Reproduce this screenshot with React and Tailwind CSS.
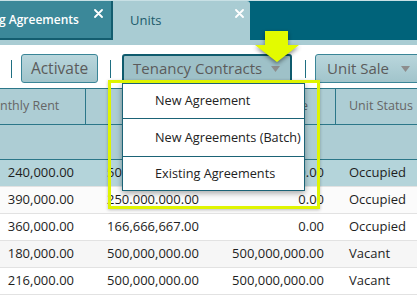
import React from "react";

const Tri = ({ className = "" }) => (
  <svg width="9" height="6" viewBox="0 0 9 6" className={className}>
    <polygon points="0,0 9,0 4.5,6" fill="#8d8d8d" />
  </svg>
);

const X = ({ className = "" }) => (
  <svg width="9" height="9" viewBox="0 0 9 9" className={className}>
    <path d="M1 1 L8 8 M8 1 L1 8" stroke="#ffffff" strokeWidth="1.8" strokeLinecap="round" />
  </svg>
);

const rows = [
  { a: "240,000.00", b: "500,000,000.00", c: "0.00", d: "Occupied", bg: "bg-[#b4d4da]" },
  { a: "390,000.00", b: "250.000.000.00", c: "0.00", d: "Occupied", bg: "bg-[#fbfbfb]" },
  { a: "360,000.00", b: "166,666,667.00", c: "0.00", d: "Occupied", bg: "bg-white" },
  { a: "180,000.00", b: "500,000,000.00", c: "500,000,000.00", d: "Vacant", bg: "bg-[#f6f6f6]" },
  { a: "216,000.00", b: "500,000,000.00", c: "500,000,000.00", d: "Vacant", bg: "bg-white" },
];

export default function App() {
  return (
    <div className="relative w-[417px] h-[297px] overflow-hidden bg-white font-['Open_Sans',sans-serif]">
      {/* tab bar */}
      <div className="flex h-[40px] bg-[#00637a] border-t border-[#c8e0e5]">
        <div className="relative w-[113px] shrink-0 bg-[#3b8899] border-r-2 border-b-2 border-[#135d6f] flex items-center">
          <span className="text-white text-[12px] font-semibold -ml-[1px] whitespace-nowrap">g Agreements</span>
          <X className="absolute right-[8px] top-[8px]" />
        </div>
        <div className="relative w-[137px] shrink-0 bg-[#a9ccd3] rounded-tr-[3px] flex items-center pl-[17px]">
          <span className="text-[#1d5b6c] text-[13px]">Units</span>
          <X className="absolute right-[6px] top-[8px]" />
        </div>
        <div className="flex-1" />
      </div>
      <div className="h-[5px] bg-[#a9ccd3]" />

      {/* toolbar */}
      <div className="h-[43px] flex items-start pt-[9px] bg-white">
        <div className="ml-[11px] mt-[6px] w-px h-[18px] bg-[#1f6f82] shrink-0" />
        <div className="ml-[9px] w-[77px] h-[29px] shrink-0 rounded-[3px] border border-[#3a8597] bg-gradient-to-b from-[#b9d6dc] to-[#a1c4cb] flex items-center justify-center text-[15.5px] text-[#5b5b5b] whitespace-nowrap">
          Activate
        </div>
        <div className="ml-[12px] mt-[6px] w-px h-[18px] bg-[#1f6f82] shrink-0" />
        <div className="ml-[11px] w-[170px] h-[29px] shrink-0 rounded-[3px] border-2 border-[#0f5b6d] bg-[#9ec1c8] flex items-center pl-[9px] pr-[10px] justify-between text-[15px] text-[#5b5b5b] whitespace-nowrap">
          <span>Tenancy Contracts</span>
          <Tri />
        </div>
        <div className="ml-[13px] mt-[6px] w-px h-[18px] bg-[#1f6f82] shrink-0" />
        <div className="ml-[9px] w-[110px] h-[29px] shrink-0 rounded-[3px] border border-[#3a8597] bg-gradient-to-b from-[#b9d6dc] to-[#a1c4cb] flex items-center pl-[11px] text-[15px] text-[#5b5b5b] whitespace-nowrap">
          <span>Unit Sale</span>
          <Tri className="ml-[12px] shrink-0" />
        </div>
      </div>

      {/* table header */}
      <div className="flex h-[37px] bg-[#adcdd4] border-t border-b border-[#2b7789] text-[12.5px] text-[#666]">
        <div className="w-[86px] shrink-0 border-r border-[#2b7789] flex items-center overflow-hidden whitespace-nowrap">nthly Rent</div>
        <div className="w-[125px] shrink-0 border-r border-[#2b7789]" />
        <div className="w-[125px] shrink-0 border-r border-[#2b7789] flex items-center justify-end pr-[27px]">Balance</div>
        <div className="flex-1 flex items-center pl-[13px] whitespace-nowrap">Unit Status</div>
      </div>
      <div className="h-[35px] bg-[#adcdd4] border-b border-[#2b7789]" />

      {/* rows */}
      {rows.map((r, i) => (
        <div key={i} className={`flex h-[27px] border-b border-[#e2e2e2] text-[13px] text-[#1e1e1e] ${r.bg}`}>
          <div className="w-[86px] shrink-0 flex items-center justify-end pr-[12px]">{r.a}</div>
          <div className="w-[125px] shrink-0 flex items-center justify-end pr-[12px]">{r.b}</div>
          <div className="w-[125px] shrink-0 flex items-center justify-end pr-[12px]">{r.c}</div>
          <div className="flex-1 flex items-center pl-[13px]">{r.d}</div>
        </div>
      ))}

      {/* dropdown menu */}
      <div className="absolute left-[122px] top-[83px] w-[183px] bg-white border border-[#1b6376] shadow-[0_2px_6px_rgba(0,0,0,0.35)] text-[12.7px] text-[#222] whitespace-nowrap">
        <div className="h-[35px] flex items-center pl-[32px] border-b border-[#1b6376]">New Agreement</div>
        <div className="h-[38px] flex items-center pl-[32px] border-b border-[#1b6376]">New Agreements (Batch)</div>
        <div className="h-[33px] flex items-center pl-[32px]">Existing Agreements</div>
      </div>

      {/* highlight rectangle */}
      <div className="absolute left-[108px] top-[80px] w-[212px] h-[129px] border-[3px] border-[#dff400] shadow-[0_1px_3px_rgba(0,0,0,0.25)]" />

      {/* arrow */}
      <svg
        className="absolute left-[253px] top-[29px] drop-shadow-[0_2px_2px_rgba(0,0,0,0.45)]"
        width="48"
        height="36"
        viewBox="0 0 48 36"
      >
        <polygon points="12,2 35,2 35,16 46,16 24,33 2,16 12,16" fill="#e3fb00" />
      </svg>
    </div>
  );
}
